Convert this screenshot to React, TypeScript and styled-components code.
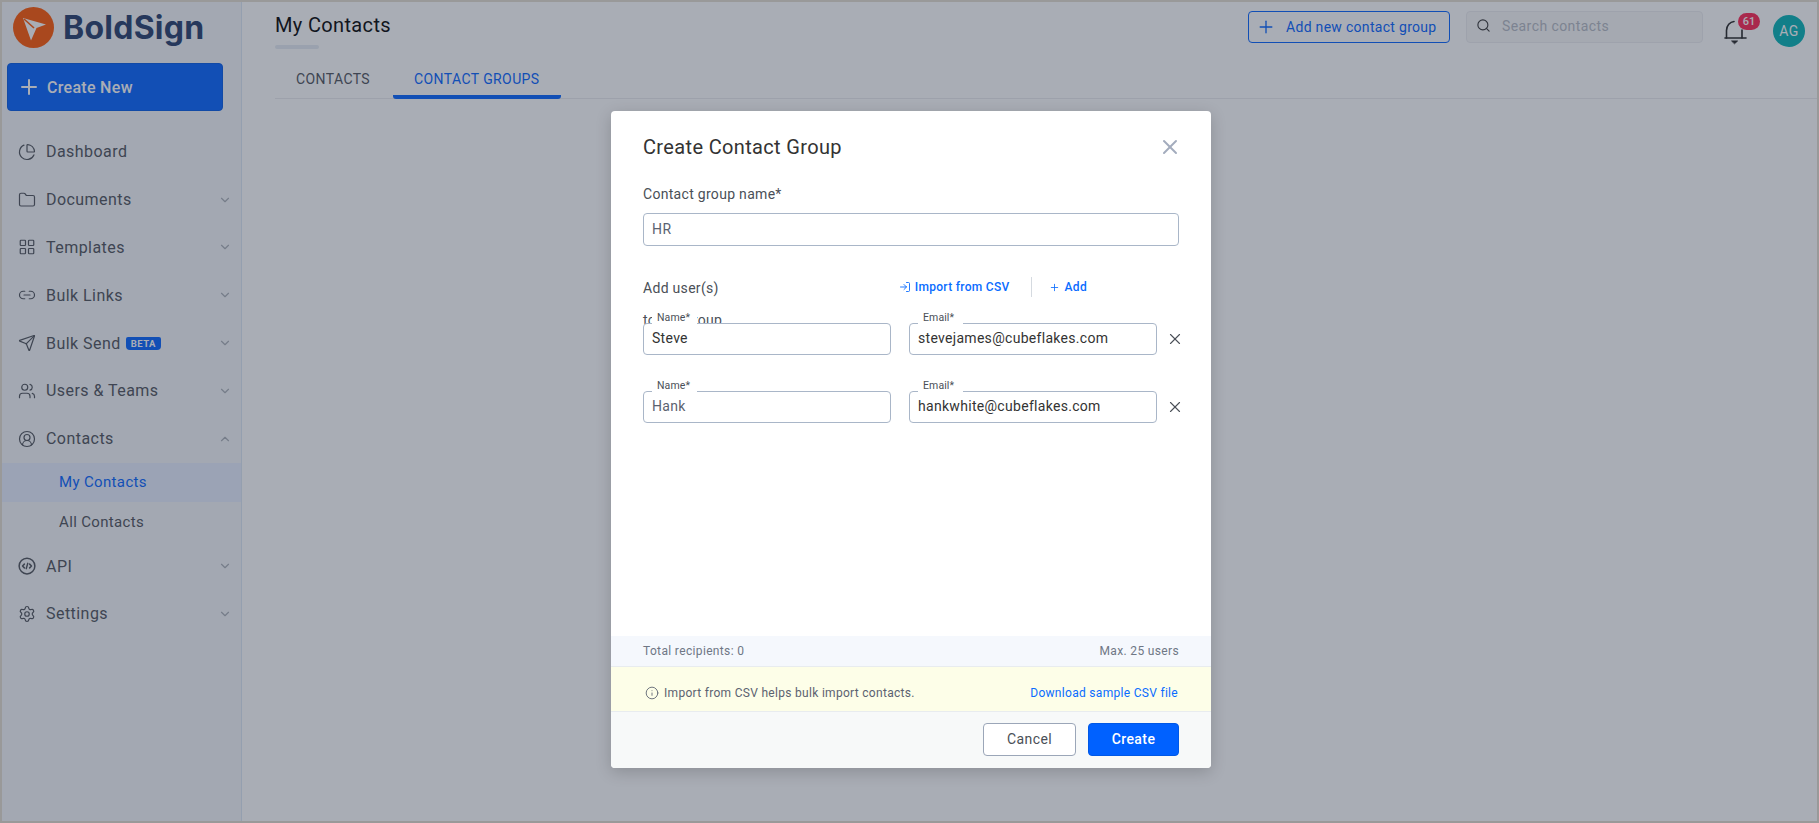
import React from "react";
import styled, { createGlobalStyle } from "styled-components";
import {
  ChartPie, Folder, LayoutGrid, Link2, Send, Users, CircleUserRound, Settings,
  ChevronDown, ChevronUp, Plus, Search, X, Info, LogIn,
} from "lucide-react";

const Global = createGlobalStyle`
  html, body { margin: 0; padding: 0; height: 100%; overflow: hidden; }
  body { font-family: Roboto, "Liberation Sans", sans-serif; background: #fff; }
  * { box-sizing: border-box; }
`;

const Frame = styled.div`
  position: relative; width: 1819px; height: 823px; border: 2px solid #999;
  display: flex; background: #fff; overflow: hidden;
`;
const Sidebar = styled.aside`
  width: 240px; flex: none; background: #f5f7fa; border-right: 1px solid #dce8f5;
  padding: 5px 0 0 5px; display: flex; flex-direction: column;
`;
const Brand = styled.div`
  display: flex; align-items: center; gap: 9px; padding-left: 6px; height: 41px;
`;
const BrandName = styled.span`
  font-family: Inter, "Open Sans", sans-serif; font-weight: 700; font-size: 32px;
  letter-spacing: .25px; color: #233a69; line-height: 1;
`;
const CreateButton = styled.button`
  margin-top: 15px; width: 216px; height: 48px; border: 1px solid #0058e6; border-radius: 4px;
  background: #0061ff; color: #fff; font: 500 16px Roboto, sans-serif;
  display: flex; align-items: center; gap: 6px; padding: 0 0 0 9px; letter-spacing: .3px;
`;
const Nav = styled.nav`
  margin: 17px 0 0 -5px; display: flex; flex-direction: column;
`;
const NavRow = styled.div`
  height: 47.8px; display: flex; align-items: center; padding: 0 9px 0 16px; gap: 10px;
  color: #4c5058; font-size: 16px; letter-spacing: .45px;
  & > svg:first-child { flex: none; }
`;
const Chevron = styled.span`
  margin-left: auto; display: flex; color: #a9aeb6;
`;
const Beta = styled.span`
  margin-left: -5px; height: 13px; padding: 0 5px; border-radius: 2px 2px 4px 4px; background: #0061ff; color: #fff;
  font: 700 9.5px/13px Roboto, sans-serif; letter-spacing: .5px;
`;
const SubRow = styled.div<{ $active?: boolean }>`
  height: 39.8px; display: flex; align-items: center; padding-left: 57px;
  font-size: 15px; letter-spacing: .35px;
  color: ${(p) => (p.$active ? "#0061ff" : "#4c5058")};
  background: ${(p) => (p.$active ? "#e7efff" : "transparent")};
`;

const Main = styled.main`
  flex: 1; display: flex; flex-direction: column; padding-left: 33px; background: #fff;
`;
const Header = styled.header`
  height: 60px; display: flex; justify-content: space-between; padding: 9px 12px 0 0;
`;
const TitleBlock = styled.div`
  display: flex; flex-direction: column;
`;
const PageTitle = styled.h1`
  margin: 2px 0 0; font-weight: 400; font-size: 20px; line-height: 24px; color: #000; letter-spacing: .35px;
`;
const TitleBar = styled.div`
  margin-top: 8px; width: 44px; height: 4px; border-radius: 2px; background: #e6ebf3;
`;
const Actions = styled.div`
  display: flex; align-items: flex-start;
`;
const AddGroup = styled.button`
  width: 202px; height: 32px; border: 1px solid #0061ff; border-radius: 4px; background: transparent;
  color: #0061ff; font: 400 14px Roboto, sans-serif; letter-spacing: .3px;
  display: flex; align-items: center; gap: 10px; padding: 0 0 0 7px;
`;
const SearchBox = styled.div`
  margin-left: 16px; width: 237px; height: 32px; border: 1px solid #ededf0; border-radius: 4px; background: #f8f8f9;
  display: flex; align-items: center; gap: 11px; padding: 0 0 3px 9px;
  color: #b4b9c2; font-size: 14px; letter-spacing: .42px;
  & > svg { color: #333; flex: none; }
`;
const BellWrap = styled.div`
  position: relative; margin: 7px 0 0 19px; width: 26px; height: 28px; color: #222;
`;
const Badge = styled.span`
  position: absolute; left: 16px; top: -5px; width: 22px; height: 17px; border-radius: 9px; background: #ff214f; color: #fff;
  font: 500 11px/17px Roboto, sans-serif; text-align: center;
`;
const Avatar = styled.div`
  margin: 4px 0 0 25px; width: 32px; height: 32px; border-radius: 50%; background: #00b2b5; color: #fff;
  display: flex; align-items: center; justify-content: center; font-size: 14px; letter-spacing: .4px;
`;
const Tabs = styled.div`
  height: 37px; display: flex; gap: 2px; border-bottom: 1px solid #ebebee;
`;
const Tab = styled.div<{ $active?: boolean }>`
  height: 37px; padding: 0 21px; display: flex; align-items: center; font-size: 14px; font-weight: 400; letter-spacing: .4px;
  color: ${(p) => (p.$active ? "#0061ff" : "#4c5058")};
  border-bottom: 4px solid ${(p) => (p.$active ? "#0061ff" : "transparent")};
  border-radius: 0 0 3px 3px;
`;

const Overlay = styled.div`
  position: absolute; inset: 0; background: rgba(44, 55, 74, .408); padding: 109px 0 0 609px;
`;
const Modal = styled.section`
  width: 600px; height: 657px; background: #fff; border-radius: 4px; overflow: hidden;
  box-shadow: 0 4px 16px rgba(0,0,0,.18); display: flex; flex-direction: column;
`;
const ModalHead = styled.div`
  height: 72px; flex: none; padding: 0 32px; display: flex; align-items: center; justify-content: space-between;
`;
const ModalTitle = styled.h2`
  margin: 0; font-weight: 400; font-size: 20px; color: #333; letter-spacing: .35px;
`;
const CloseWrap = styled.span`
  display: flex; color: #a3acbd; margin-right: -3px;
`;
const Body = styled.div`
  flex: 1; padding: 1px 32px 0; display: flex; flex-direction: column;
`;
const FieldLabel = styled.div`
  font-size: 14px; line-height: 20px; color: #4a4f57; letter-spacing: .3px;
`;
const WideInput = styled.div`
  margin-top: 9px; height: 33px; border: 1px solid #a9b6c8; border-radius: 4px; padding: 0 8px 2px;
  display: flex; align-items: center; font-size: 14px; color: #5b6270; letter-spacing: .4px;
`;
const AddRow = styled.div`
  margin-top: 30px; height: 24px; display: flex; align-items: center;
`;
const Links = styled.div`
  margin: -2px 92px 0 auto; display: flex; align-items: center; color: #0a6cff; font-size: 12px; font-weight: 500; letter-spacing: .3px;
`;
const LinkItem = styled.span<{ $wide?: boolean }>`
  display: flex; align-items: center; gap: ${(p) => (p.$wide ? "5px" : "4px")};
`;
const Divider = styled.span`
  width: 1px; height: 20px; background: #d5dae0; margin: 0 17px 0 21px;
`;
const Hint = styled.div`
  margin-top: 11px; height: 18px; font-size: 14px; line-height: 18px; color: #4a4f57; letter-spacing: .35px;
`;
const Recipient = styled.div<{ $first?: boolean }>`
  position: relative; display: flex; align-items: center; gap: 18px; margin-top: ${(p) => (p.$first ? "-6px" : "36px")};
`;
const FloatField = styled.div`
  position: relative; flex: none; width: 248px; height: 32px; border: 1px solid #a9b6c8; border-radius: 4px; background: #fff;
`;
const FieldValue = styled.div<{ $muted?: boolean }>`
  height: 100%; display: flex; align-items: center; font-size: 14px; letter-spacing: .3px;
  padding: 0 0 3px 8px;
  color: ${(p) => (p.$muted ? "#5b6270" : "#333")};
`;
const FloatLabel = styled.span`
  position: absolute; left: 8px; top: -12px; height: 12px; padding: 0 4px 0 5px; width: 45px; background: #fff;
  font-size: 10.5px; line-height: 11px; color: #4a4f57; letter-spacing: .1px;
`;
const Remove = styled.span`
  display: flex; margin: 0 0 0 -9.5px; color: #4a4f57;
`;
const Totals = styled.div`
  height: 31px; flex: none; padding: 0 32px; display: flex; align-items: center; justify-content: space-between;
  background: #f5f8fd; border-bottom: 1px solid #e8ecef; font-size: 12px; color: #6f7785; letter-spacing: .35px;
`;
const Notice = styled.div`
  height: 45px; flex: none; padding: 8px 33px 0 34px; display: flex; align-items: center; justify-content: space-between;
  background: #fdfee8; border-bottom: 1px solid #e8ecef; font-size: 12px; color: #5b6270; letter-spacing: .3px;
`;
const NoticeText = styled.span`
  display: flex; align-items: center; gap: 5px;
`;
const NoticeLink = styled.span`
  color: #0a6cff;
`;
const Footer = styled.div`
  flex: none; height: 56px; padding: 11px 32px 0 0; background: #f7f9f9; display: flex; justify-content: flex-end; align-items: flex-start; gap: 12px;
`;
const Cancel = styled.button`
  width: 93px; height: 33px; padding: 0 0 2px; background: #fff; border: 1px solid #9ba6b8; border-radius: 4px;
  font: 400 14px Roboto, sans-serif; color: #4a4f57; letter-spacing: .42px;
`;
const Primary = styled.button`
  width: 91px; height: 33px; padding: 0 0 2px; background: #0061ff; border: 1px solid #0058e6; border-radius: 4px;
  font: 500 14px Roboto, sans-serif; color: #fff; letter-spacing: .42px;
`;

const Logo = () => (
  <svg width="41" height="41" viewBox="0 0 41 41" aria-hidden="true" style={{ flex: "none" }}>
    <circle cx="20.5" cy="20.5" r="20.5" fill="#ff5500" />
    <path d="M10 11 L33 17.5 L23.5 21 L18 33.5 Z" fill="#fff" />
    <path d="M11 12 L21 21" stroke="#ff5500" strokeWidth="1.6" fill="none" />
  </svg>
);
const ApiIcon = ({ size = 18 }: { size?: number }) => (
  <svg width={size} height={size} viewBox="0 0 24 24" fill="none" stroke="currentColor" strokeWidth="2" strokeLinecap="round" strokeLinejoin="round" aria-hidden="true">
    <circle cx="12" cy="12" r="10.5" />
    <path d="M8.5 9.5 6 12l2.5 2.5M15.5 9.5 18 12l-2.5 2.5M13 8.5l-2 7" />
  </svg>
);
const BellIcon = () => (
  <svg width="26" height="28" viewBox="0 0 26 28" fill="none" stroke="currentColor" strokeWidth="1.6" strokeLinecap="round" aria-hidden="true">
    <path d="M3 20h21" />
    <path d="M4.5 20v-7.5C4.5 7.5 8 3.8 12 3.5M20 20v-8" />
    <path d="M10 23h5.5l-2.75 2.5z" fill="currentColor" strokeWidth="1" />
  </svg>
);

const items: [React.ReactNode, string, boolean][] = [
  [<ChartPie size={18} strokeWidth={1.6} />, "Dashboard", false],
  [<Folder size={18} strokeWidth={1.6} />, "Documents", true],
  [<LayoutGrid size={18} strokeWidth={1.6} />, "Templates", true],
  [<Link2 size={18} strokeWidth={1.6} />, "Bulk Links", true],
  [<Send size={18} strokeWidth={1.6} />, "Bulk Send", true],
  [<Users size={18} strokeWidth={1.6} />, "Users & Teams", true],
];

function Field({ label, value, muted }: { label: string; value: string; muted?: boolean }) {
  return (
    <FloatField>
      <FloatLabel>{label}</FloatLabel>
      <FieldValue $muted={muted}>{value}</FieldValue>
    </FloatField>
  );
}

export default function App() {
  return (
    <>
      <Global />
      <Frame>
        <Sidebar>
          <Brand>
            <Logo />
            <BrandName>BoldSign</BrandName>
          </Brand>
          <CreateButton><Plus size={24} strokeWidth={2} />Create New</CreateButton>
          <Nav>
            {items.map(([icon, label, chev]) => (
              <NavRow key={label}>
                {icon}
                {label}
                {label === "Bulk Send" && <Beta>BETA</Beta>}
                {chev && <Chevron><ChevronDown size={14} /></Chevron>}
              </NavRow>
            ))}
            <NavRow>
              <CircleUserRound size={18} strokeWidth={1.6} />Contacts
              <Chevron><ChevronUp size={14} /></Chevron>
            </NavRow>
            <SubRow $active>My Contacts</SubRow>
            <SubRow>All Contacts</SubRow>
            <NavRow>
              <ApiIcon />API
              <Chevron><ChevronDown size={14} /></Chevron>
            </NavRow>
            <NavRow>
              <Settings size={18} strokeWidth={1.6} />Settings
              <Chevron><ChevronDown size={14} /></Chevron>
            </NavRow>
          </Nav>
        </Sidebar>
        <Main>
          <Header>
            <TitleBlock>
              <PageTitle>My Contacts</PageTitle>
              <TitleBar />
            </TitleBlock>
            <Actions>
              <AddGroup><Plus size={20} strokeWidth={1.6} />Add new contact group</AddGroup>
              <SearchBox><Search size={15} strokeWidth={1.8} />Search contacts</SearchBox>
              <BellWrap><BellIcon /><Badge>61</Badge></BellWrap>
              <Avatar>AG</Avatar>
            </Actions>
          </Header>
          <Tabs>
            <Tab>CONTACTS</Tab>
            <Tab $active>CONTACT GROUPS</Tab>
          </Tabs>
        </Main>
        <Overlay>
          <Modal>
            <ModalHead>
              <ModalTitle>Create Contact Group</ModalTitle>
              <CloseWrap><X size={24} strokeWidth={2} /></CloseWrap>
            </ModalHead>
            <Body>
              <FieldLabel>Contact group name*</FieldLabel>
              <WideInput>HR</WideInput>
              <AddRow>
                <FieldLabel>Add user(s)</FieldLabel>
                <Links>
                  <LinkItem><LogIn size={12} strokeWidth={1.8} />Import from CSV</LinkItem>
                  <Divider />
                  <LinkItem $wide><Plus size={11} strokeWidth={1.8} />Add</LinkItem>
                </Links>
              </AddRow>
              <Hint>to the group</Hint>
              <Recipient $first>
                <Field label="Name*" value="Steve" />
                <Field label="Email*" value="stevejames@cubeflakes.com" />
                <Remove><X size={18} strokeWidth={1.5} /></Remove>
              </Recipient>
              <Recipient>
                <Field label="Name*" value="Hank" muted />
                <Field label="Email*" value="hankwhite@cubeflakes.com" />
                <Remove><X size={18} strokeWidth={1.5} /></Remove>
              </Recipient>
            </Body>
            <Totals><span>Total recipients: 0</span><span>Max. 25 users</span></Totals>
            <Notice>
              <NoticeText><Info size={14} strokeWidth={1.5} />Import from CSV helps bulk import contacts.</NoticeText>
              <NoticeLink>Download sample CSV file</NoticeLink>
            </Notice>
            <Footer>
              <Cancel>Cancel</Cancel>
              <Primary>Create</Primary>
            </Footer>
          </Modal>
        </Overlay>
      </Frame>
    </>
  );
}
